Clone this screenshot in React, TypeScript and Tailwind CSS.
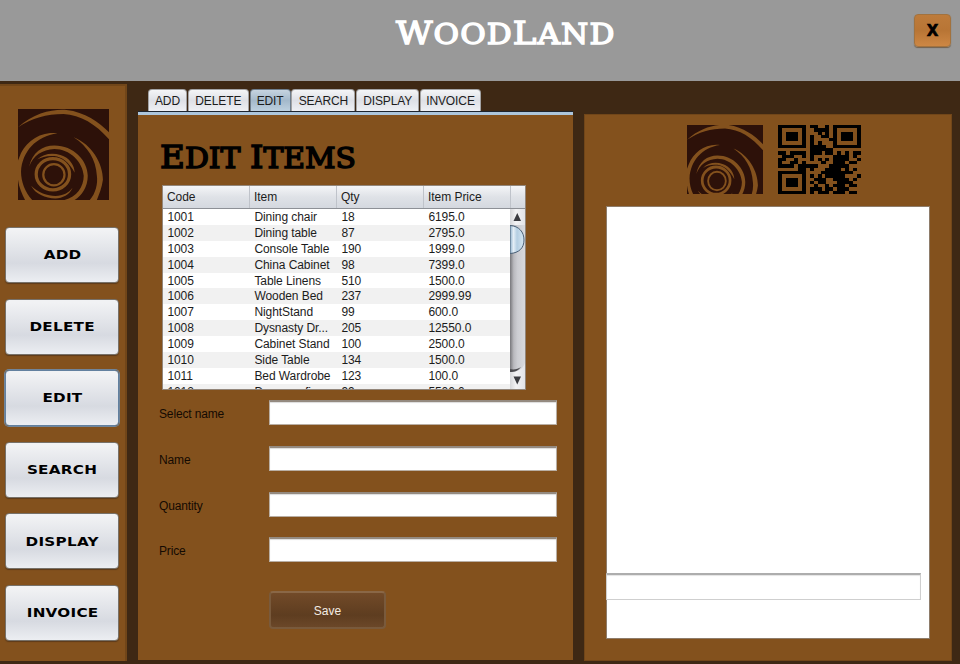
import React from "react";

const ROWS: [string, string, string, string][] = [
  ["1001", "Dining chair", "18", "6195.0"],
  ["1002", "Dining table", "87", "2795.0"],
  ["1003", "Console Table", "190", "1999.0"],
  ["1004", "China Cabinet", "98", "7399.0"],
  ["1005", "Table Linens", "510", "1500.0"],
  ["1006", "Wooden Bed", "237", "2999.99"],
  ["1007", "NightStand", "99", "600.0"],
  ["1008", "Dysnasty Dr...", "205", "12550.0"],
  ["1009", "Cabinet Stand", "100", "2500.0"],
  ["1010", "Side Table", "134", "1500.0"],
  ["1011", "Bed Wardrobe", "123", "100.0"],
  ["1012", "Dressers fin...", "99", "5500.0"],
];

const NAV = ["ADD", "DELETE", "EDIT", "SEARCH", "DISPLAY", "INVOICE"];
const TABS: [string, string][] = [
  ["ADD", "w-[39px]"],
  ["DELETE", "w-[61px]"],
  ["EDIT", "w-[41px]"],
  ["SEARCH", "w-[64px]"],
  ["DISPLAY", "w-[63px]"],
  ["INVOICE", "w-[61px]"],
];
const FIELDS = ["Select name", "Name", "Quantity", "Price"];

const QR = [
  "111111101100101111111",
  "100000100111101000001",
  "101110100010101011101",
  "101110101001101011101",
  "101110101000011011101",
  "100000101010001000001",
  "111111101111001111111",
  "000000001111110000000",
  "110111101110110101011",
  "011100101000001111010",
  "110010001010101111001",
  "100110100001001110110",
  "111101111100011111000",
  "000001101000111101010",
  "111111100001111111100",
  "100000101010111110001",
  "101110100111001111010",
  "101110101011000111100",
  "101110100100101110110",
  "100000101110110111000",
  "111111101011101110110",
];

function Rings({ className }: { className: string }) {
  return (
    <svg className={className} viewBox="0 0 90 90" preserveAspectRatio="none">
      <rect width="90" height="90" fill="#2d1109" />
      <g fill="#83511d">
        <path d="M0 18C16 4 34 0 48 1C66 3 80 13 90 23V30C77 15 62 6 45 5C28 5 14 9 0 18Z" />
        <path d="M39 24C22 22 8 32 2 46L0 51V70C1 78 4 84 7 90H14C7 82 3 72 3 62C4 42 18 27 39 24Z" />
        <path d="M55 28C73 35 84 54 84 70C83 78 80 85 78 90H71C77 83 79 74 78 66C77 50 69 37 55 28Z" />
        <path d="M11 57C14 43 24 36 36 36C55 36 69 51 69 66C69 77 63 86 56 90H46C58 87 65 77 65 66C64 52 51 39.500 36 39.500C24 40 15 46 11 57Z" />
        <path d="M19 50C25 44 34 43 42 45.500C51 48 56 56 56 63C51 53 43 47 36 46.500C29 46 24 47 19 50Z" />
        <path d="M13 76C20 83 29 86 37 86C45 86 50 83 54 78C51 85 44 88.500 37 88.500C27 88.500 17 84 13 76Z" />
      </g>
      <g fill="none" stroke="#83511d">
        <ellipse cx="34.500" cy="64.500" rx="16.500" ry="15.500" strokeWidth="3.200" />
        <ellipse cx="35.500" cy="65" rx="10.500" ry="10.500" strokeWidth="2.200" />
      </g>
    </svg>
  );
}

function QrCode() {
  return (
    <svg className="h-[69px] w-[83px]" viewBox="0 0 21 21" preserveAspectRatio="none" shapeRendering="crispEdges">
      {QR.flatMap((row, y) =>
        row.split("").map((c, x) => (c === "1" ? <rect key={x + "-" + y} x={x} y={y} width="1.02" height="1.02" /> : null)),
      )}
    </svg>
  );
}

function Cap({ big, small }: { big: string; small: string }) {
  return (
    <>
      <span className="text-[32px]">{big}</span>
      <span className="text-[28px]">{small}</span>
    </>
  );
}

export default function App() {
  return (
    <div className="flex h-[664px] w-[960px] flex-col overflow-hidden bg-[#3e2814] font-['Liberation_Sans',sans-serif] text-[12px] text-black">
      <header className="flex h-[81px] shrink-0 items-start justify-between bg-[#999999]">
        <h1 className="mt-[9px] ml-[396px] origin-left scale-x-[1.11] whitespace-nowrap font-['DejaVu_Serif',serif] leading-[48px] font-normal tracking-[1px] text-white [-webkit-text-stroke:1.4px_#fff]">
          <Cap big="W" small="OOD" />
          <Cap big="L" small="AND" />
        </h1>
        <button className="mt-[14px] mr-[9px] flex h-[33px] w-[37px] items-center justify-center rounded-[4px] border border-[#a2723e] bg-linear-to-b from-[#bd7b3b] via-[#b87535] to-[#cd8744] pt-[2px] font-['DejaVu_Sans',sans-serif] text-[15px] font-bold shadow-[0_1px_1px_#72604d]">
          <span className="[-webkit-text-stroke:0.6px_#000]">X</span>
        </button>
      </header>

      <div className="flex min-h-0 flex-1">
        <aside className="mt-[3px] flex h-[577px] w-[127px] shrink-0 flex-col border-t-2 border-r-2 border-[#714619] bg-[#83511d]">
          <Rings className="mt-[23px] ml-[18px] h-[91px] w-[91px] shrink-0" />
          <nav className="mt-[27px] ml-[5px] flex flex-col gap-[15.6px]">
            {NAV.map((n) => (
              <button
                key={n}
                className={
                  "flex h-[56px] w-[114px] items-center justify-center rounded-[4px] border bg-linear-to-b from-[#f1f2f4] from-5% via-[#d7dae1] via-65% to-[#eceef2] pt-[2px] pl-[1px] font-['DejaVu_Sans',sans-serif] text-[11.7px] font-bold " +
                  (n === "EDIT" ? "border-[#62809f] shadow-[0_0_0_1px_#71859a]" : "border-[#777169] shadow-[0_1px_1px_#5c3a1b]")
                }
              >
                <span className="scale-x-[1.3] tracking-[0.2px]">{n}</span>
              </button>
            ))}
          </nav>
        </aside>

        <main className="mt-[8px] ml-[11px] flex h-[571px] w-[435px] shrink-0 flex-col">
          <div className="ml-[10px] flex h-[22px] shrink-0 gap-[0.8px]">
            {TABS.map(([t, w]) => (
              <div
                key={t}
                className={
                  "flex items-center justify-center rounded-t-[4px] border border-b-0 tracking-[-0.1px] text-[#1c1c1c] " +
                  w +
                  (t === "EDIT"
                    ? " border-[#6e7e8d] bg-linear-to-b from-[#c6d4e0] via-[#a4b9cb] to-[#bdd0df]"
                    : " border-[#a3a3a4] bg-linear-to-b from-[#f4f5f7] via-[#dee0e6] to-[#eff0f4]")
                }
              >
                {t}
              </div>
            ))}
          </div>
          <div className="h-[4px] shrink-0 border-t border-[#1d2530] bg-[#adc6dc]" />
          <section className="flex flex-1 flex-col bg-[#83511d]">
            <h2 className="mt-[18px] mb-[1px] ml-[22px] h-[48px] origin-left scale-x-[1.065] whitespace-nowrap font-['DejaVu_Serif',serif] leading-[48px] font-normal [-webkit-text-stroke:1.5px_#000]">
              <Cap big="E" small="DIT " />
              <Cap big="I" small="TEMS" />
            </h2>

            <div className="mt-[3px] ml-[24px] h-[205px] w-[364px] overflow-hidden border border-[#93867a] bg-white text-[#1c1c1c]">
              <div className="flex h-[23px] border-b border-[#8d9096] bg-linear-to-b from-[#f4f5f7] via-[#dfe2e7] to-[#d4d8df] leading-[22px]">
                {["Code", "Item", "Qty", "Item Price"].map((h) => (
                  <div key={h} className="w-[87px] shrink-0 border-r border-[#bfc3ca] pl-[4px] tracking-[-0.05px]">
                    {h}
                  </div>
                ))}
              </div>
              <div className="flex h-[180px]">
                <div className="w-[347px] shrink-0">
                  {ROWS.map((r) => (
                    <div key={r[0]} className="flex h-[15.9px] leading-[16px] tracking-[-0.07px] whitespace-nowrap even:bg-[#f1f1f1]">
                      {r.map((c, j) => (
                        <span key={j} className="w-[87px] shrink-0 pl-[4.4px]">
                          {c}
                        </span>
                      ))}
                    </div>
                  ))}
                </div>
                <svg className="h-[180px] w-[15px]" viewBox="0 0 15 180">
                  <defs>
                    <linearGradient id="track">
                      <stop offset="0" stopColor="#77777b" />
                      <stop offset="0.25" stopColor="#b9b9be" />
                      <stop offset="0.5" stopColor="#cccdd2" />
                      <stop offset="1" stopColor="#d8d9dd" />
                    </linearGradient>
                    <linearGradient id="thumb">
                      <stop offset="0" stopColor="#8eb0cb" />
                      <stop offset="0.25" stopColor="#e4eef6" />
                      <stop offset="0.5" stopColor="#b4cee2" />
                      <stop offset="1" stopColor="#d6e7f3" />
                    </linearGradient>
                    <linearGradient id="cell">
                      <stop offset="0" stopColor="#d6d7da" />
                      <stop offset="0.4" stopColor="#f3f3f5" />
                      <stop offset="1" stopColor="#e2e3e7" />
                    </linearGradient>
                  </defs>
                  <rect width="15" height="180" fill="url(#cell)" />
                  <path d="M0 16H15V154C13 160 8 163 0 163Z" fill="url(#track)" />
                  <path d="M0 160C4 161 8 160 11 158C8 162 5 163 0 163Z" fill="#4c4c50" />
                  <path d="M0 16.500C9 17 14 23 14 31C14 39 9 44 0 44.500Z" fill="url(#thumb)" stroke="#4a6077" />
                  <path d="M3.500 12H11L7.250 4Z" fill="#3a3b40" />
                  <path d="M3.500 167.500H11L7.250 175.500Z" fill="#3a3b40" />
                </svg>
              </div>
            </div>

            <div className="mt-[10px] ml-[21px] flex flex-col gap-[20.8px]">
              {FIELDS.map((f) => (
                <label key={f} className="flex h-[25px] items-center">
                  <span className="w-[110px] pt-[3px] tracking-[-0.15px] text-[#140a02]">{f}</span>
                  <input className="h-[25px] w-[288px] border border-t-2 border-[#b9aea3] border-t-[#948a80] bg-white shadow-[inset_0_1px_1px_#dcdcdc]" />
                </label>
              ))}
            </div>
            <button className="mt-[29px] ml-[131px] flex h-[38px] w-[117px] items-center justify-center rounded-[4px] border-2 border-[#795a3c] border-t-[#8a6746] bg-linear-to-b from-[#724a28] via-[#5e3d20] via-65% to-[#6b4728] pt-[2px] text-[12px] text-[#f4ece3]">
              Save
            </button>
          </section>
        </main>

        <section className="mt-[33px] ml-[11px] flex h-[547px] w-[368px] shrink-0 flex-col border border-[#714619] bg-[#83511d]">
          <div className="mt-[10px] ml-[102px] flex h-[69px] gap-[15px]">
            <div className="h-[69px] w-[76px] overflow-hidden">
              <Rings className="-mt-[1px] h-[79px] w-[76px]" />
            </div>
            <QrCode />
          </div>
          <div className="mt-[12px] ml-[21px] flex h-[433px] w-[324px] flex-col justify-end border border-[#8e7c6a] bg-white">
            <input className="mb-[38px] -ml-px h-[27px] w-[315px] border border-t-2 border-[#cfcfcf] border-t-[#adadad] bg-white shadow-[inset_0_1px_1px_#e4e4e4]" />
          </div>
        </section>
      </div>
    </div>
  );
}
